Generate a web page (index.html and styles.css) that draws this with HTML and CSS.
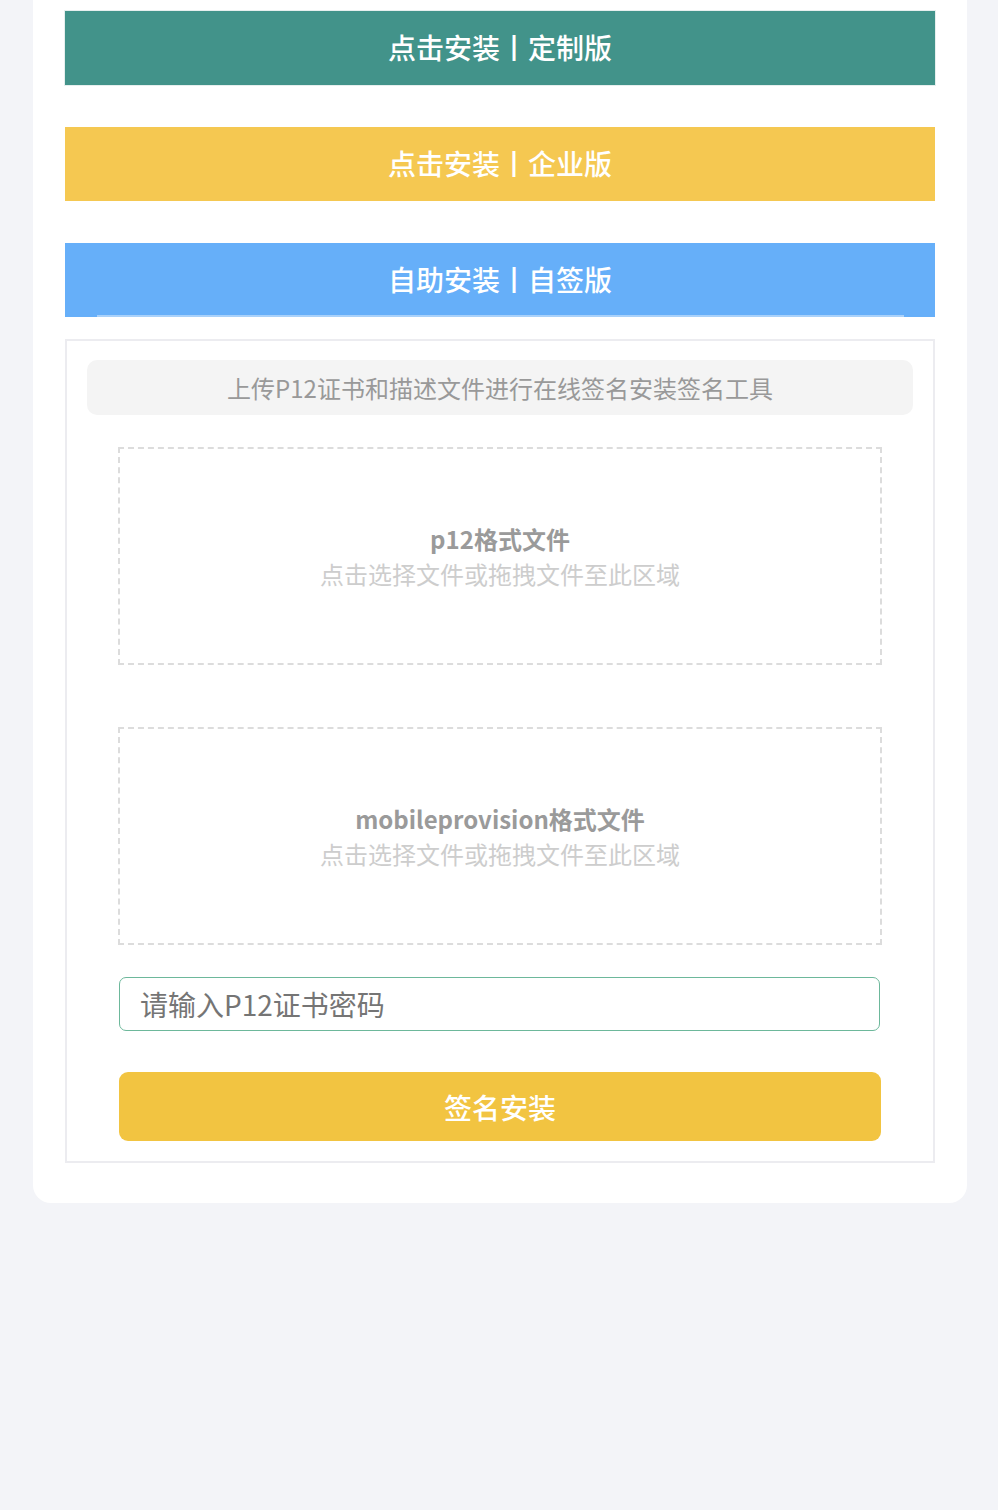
FILE: index.html
```html
<!DOCTYPE html>
<html lang="zh-CN">
<head>
<meta charset="utf-8">
<title>签名安装</title>
<link rel="stylesheet" href="styles.css">
</head>
<body>
<div class="page">
  <div class="card">
    <div class="btn btn-green">点击安装丨定制版</div>
    <div class="btn btn-yellow">点击安装丨企业版</div>
    <div class="btn btn-blue">自助安装丨自签版</div>
    <div class="panel">
      <div class="banner">上传P12证书和描述文件进行在线签名安装签名工具</div>
      <div class="drop drop-first">
        <div class="drop-title">p12格式文件</div>
        <div class="drop-sub">点击选择文件或拖拽文件至此区域</div>
      </div>
      <div class="drop drop-second">
        <div class="drop-title">mobileprovision格式文件</div>
        <div class="drop-sub">点击选择文件或拖拽文件至此区域</div>
      </div>
      <input class="pwd" type="text" placeholder="请输入P12证书密码">
      <div class="submit">签名安装</div>
    </div>
  </div>
</div>
</body>
</html>
```
FILE: styles.css
```css
* { box-sizing: border-box; }
html, body {
  margin: 0;
  padding: 0;
  background: #f3f4f8;
  font-family: "PingFang SC", "Noto Sans CJK SC", "Noto Sans", sans-serif;
}
.page {
  height: 1510px;
  padding: 0 31px 0 33px;
}
.card {
  background: #fff;
  border-radius: 0 0 18px 18px;
  padding: 11px 32px 40px;
}
.btn {
  height: 74px;
  display: flex;
  align-items: center;
  justify-content: center;
  color: #fff;
  font-size: 28px;
  font-weight: 500;
  line-height: 1;
  padding-bottom: 2px;
  margin-bottom: 42px;
}
.btn-green { background: #42938a; box-shadow: 0 0 0 1px #e6efee; }
.btn-yellow { background: #f5c851; }
.btn-blue {
  background: #66aff9;
  margin-bottom: 22px;
  position: relative;
}
.btn-blue::after {
  content: "";
  position: absolute;
  left: 32px;
  right: 31px;
  bottom: 0;
  height: 2px;
  background: #a9d1fa;
}
.panel {
  border: 2px solid #ececf0;
  padding: 19px 20px 20px;
  display: flex;
  flex-direction: column;
}
.banner {
  height: 55px;
  background: #f4f4f4;
  border-radius: 10px;
  display: flex;
  align-items: center;
  justify-content: center;
  color: #999;
  font-size: 24px;
}
.drop {
  margin: 0 31px;
  height: 218px;
  border: 2px dashed #dcdcdc;
  display: flex;
  flex-direction: column;
  align-items: center;
  justify-content: center;
  font-size: 24px;
  line-height: 35px;
}
.drop-first { margin-top: 32px; }
.drop-second { margin-top: 62px; }
.drop-title { color: #9a9a9a; font-weight: 700; }
.drop-sub { color: #cdcdcd; }
.pwd {
  margin: 32px 33px 0 32px;
  height: 54px;
  border: 1px solid #6db89b;
  border-radius: 7px;
  padding: 0 20px;
  font-family: inherit;
  font-size: 28px;
  color: #333;
  outline: none;
  background: #fff;
}
.pwd::placeholder { color: #757575; }
.submit {
  margin: 41px 32px 0 32px;
  height: 69px;
  background: #f2c441;
  border-radius: 9px;
  color: #fff;
  font-size: 28px;
  font-weight: 500;
  display: flex;
  align-items: center;
  justify-content: center;
}
```
